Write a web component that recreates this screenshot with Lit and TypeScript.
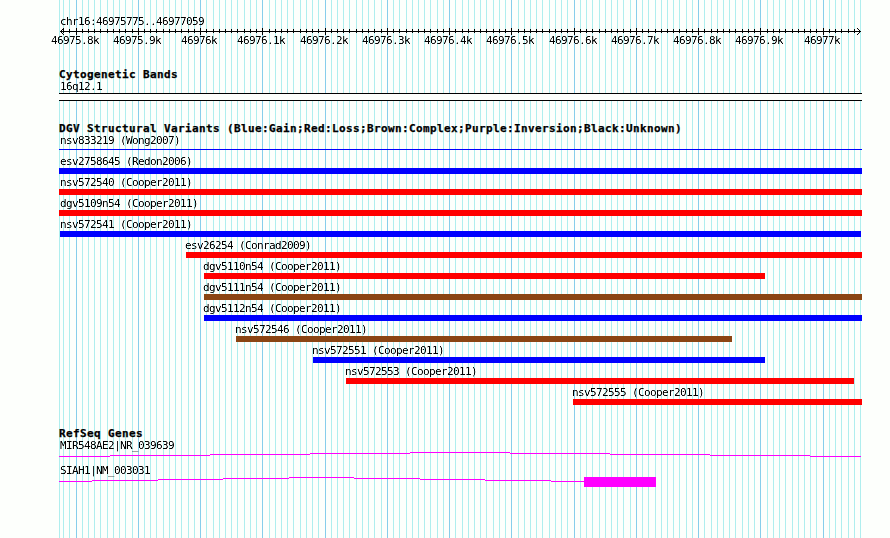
import { LitElement, html, svg, css } from 'lit'
import { customElement } from 'lit/decorators.js'
import { styleMap } from 'lit/directives/style-map.js'

const START = 46975775
const SCALE = 800 / 1285

const toX = (bp: number) => Math.round(60 + (bp - START) * SCALE)

const variants = [
	{ name: 'nsv833219 (Wong2007)', from: 59, to: 862, kind: 'thin' },
	{ name: 'esv2758645 (Redon2006)', from: 59, to: 862, kind: 'gain' },
	{ name: 'nsv572540 (Cooper2011)', from: 59, to: 862, kind: 'loss' },
	{ name: 'dgv5109n54 (Cooper2011)', from: 59, to: 862, kind: 'loss' },
	{ name: 'nsv572541 (Cooper2011)', from: 60, to: 861, kind: 'gain' },
	{ name: 'esv26254 (Conrad2009)', from: 186, to: 862, kind: 'loss' },
	{ name: 'dgv5110n54 (Cooper2011)', from: 204, to: 765, kind: 'loss' },
	{ name: 'dgv5111n54 (Cooper2011)', from: 204, to: 862, kind: 'complex' },
	{ name: 'dgv5112n54 (Cooper2011)', from: 204, to: 862, kind: 'gain' },
	{ name: 'nsv572546 (Cooper2011)', from: 236, to: 732, kind: 'complex' },
	{ name: 'nsv572551 (Cooper2011)', from: 313, to: 765, kind: 'gain' },
	{ name: 'nsv572553 (Cooper2011)', from: 346, to: 854, kind: 'loss' },
	{ name: 'nsv572555 (Cooper2011)', from: 573, to: 862, kind: 'loss' },
]

// steps are the x positions where the intron line moves by one pixel
const genes = [
	{
		name: 'MIR548AE2|NR_039639',
		steps: [59, 110, 210, 310, 410, 510, 610, 710, 810, 861],
		exon: null,
	},
	{
		name: 'SIAH1|NM_003031',
		steps: [59, 92, 158, 223, 289, 354, 420, 485, 551, 584],
		exon: [584, 656],
	},
]

@customElement('app-root')
export class AppRoot extends LitElement {
	static styles = css`
		:host {
			display: block;
			position: relative;
			width: 890px;
			height: 538px;
			overflow: hidden;
			background: #fdfffc;
			color: #000;
			font: 11px/14px 'DejaVu Sans Mono', monospace;
			letter-spacing: -0.622px;
		}
		svg {
			display: block;
		}
		.grid,
		.defs {
			position: absolute;
			top: 0;
			left: 0;
		}
		.tracks {
			position: relative;
			display: flex;
			flex-direction: column;
			padding-top: 15px;
		}
		.text {
			height: 12px;
			white-space: nowrap;
			filter: url(#crisp);
		}
		.region {
			padding-left: 60px;
		}
		.axis text {
			filter: url(#crisp);
		}
		h2 {
			margin: 0;
			padding-left: 59px;
			height: 12px;
			font-size: 11px;
			line-height: 14px;
			letter-spacing: 0.378px;
			white-space: nowrap;
			-webkit-text-stroke: 0.25px #000;
		}
		.cytoband {
			margin-top: 7px;
		}
		.band {
			box-sizing: border-box;
			height: 8px;
			width: 803px;
			margin: 1px 0 0 59px;
			border: solid #000;
			border-width: 1px 0;
			background: #fdfffc;
		}
		.variants {
			margin-top: 21px;
		}
		.variant {
			height: 21px;
		}
		.bar {
			height: 6px;
			margin-top: 1px;
		}
		.bar--thin {
			height: 1px;
			margin-top: 3px;
			background: #0000ff;
		}
		.bar--gain {
			background: #0000ff;
		}
		.bar--loss {
			background: #ff0000;
		}
		.bar--complex {
			background: #8b4513;
		}
		.genes {
			margin-top: 20px;
		}
		.gene {
			height: 25px;
		}
	`

	_renderGrid() {
		const lines = [svg`<rect x="59" width="1" height="538" fill="#afeeee" />`]
		for (let bp = 46975780; bp <= 46977060; bp += 10) {
			const fill = bp % 100 === 0 ? '#87ceeb' : '#afeeee'
			lines.push(svg`<rect x=${toX(bp)} width="1" height="538" fill=${fill} />`)
		}
		return html`<svg class="grid" width="890" height="538">${lines}</svg>`
	}

	_renderAxis() {
		const ticks = []
		for (let bp = 46975780; bp < 46977060; bp += 10) {
			const x = toX(bp)
			const major = bp % 100 === 0
			ticks.push(svg`<rect x=${x} y=${major ? 1 : 2} width="1" height=${major ? 7 : 4} />`)
			if (major) {
				const label = `${bp / 1000}k`
				ticks.push(svg`<text x=${x - label.length * 3 - 1} y="17">${label}</text>`)
			}
		}
		return html`
			<svg class="axis" width="890" height="34">
				<rect x="60" y="4" width="801" height="1" />
				<path
					d="M64 1L60.5 4.5L64 8M857 1L860.5 4.5L857 8"
					fill="none"
					stroke="#000"
					shape-rendering="crispEdges"
				/>
				${ticks}
			</svg>
		`
	}

	_renderVariant(variant: (typeof variants)[number]) {
		const { name, from, to, kind } = variant
		const indent = from <= 60 ? 60 : from - 1
		return html`
			<div class="variant">
				<div class="text" style=${styleMap({ paddingLeft: `${indent}px` })}>${name}</div>
				<div
					class="bar bar--${kind}"
					style=${styleMap({ marginLeft: `${from}px`, width: `${to - from}px` })}
				></div>
			</div>
		`
	}

	_renderGene({ name, steps, exon }: { name: string; steps: number[]; exon: number[] | null }) {
		const segments = steps.slice(1).map((end, i) => {
			const level = 4 - Math.abs(4 - i)
			return svg`<rect x=${steps[i]} y=${5 - level} width=${end - steps[i]} height="1" />`
		})
		return html`
			<div class="gene">
				<div class="text region">${name}</div>
				<svg width="890" height="12" fill="#ff00ff">
					${segments}
					${exon ? svg`<rect x=${exon[0]} y="1" width=${exon[1] - exon[0]} height="10" />` : ''}
				</svg>
			</div>
		`
	}

	render() {
		return html`
			${this._renderGrid()}
			<svg class="defs" width="0" height="0">
				<filter id="crisp" x="0" y="-20%" width="100%" height="150%">
					<feComponentTransfer>
						<feFuncA type="linear" slope="1.5" intercept="-0.25" />
					</feComponentTransfer>
				</filter>
			</svg>
			<div class="tracks">
				<div class="text region">chr16:46975775..46977059</div>
				${this._renderAxis()}
				<section class="cytoband">
					<h2>Cytogenetic Bands</h2>
					<div class="text region">16q12.1</div>
					<div class="band"></div>
				</section>
				<section class="variants">
					<h2>DGV Structural Variants (Blue:Gain;Red:Loss;Brown:Complex;Purple:Inversion;Black:Unknown)</h2>
					${variants.map((variant) => this._renderVariant(variant))}
				</section>
				<section class="genes">
					<h2>RefSeq Genes</h2>
					${genes.map((gene) => this._renderGene(gene))}
				</section>
			</div>
		`
	}
}
